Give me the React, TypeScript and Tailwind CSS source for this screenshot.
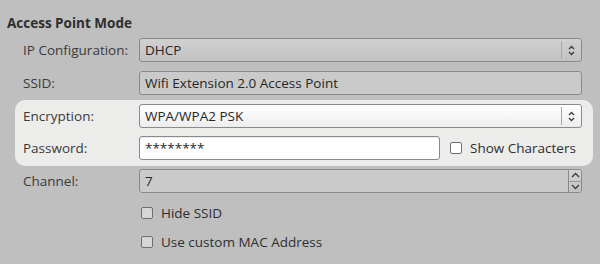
import React from "react";

const font = { fontFamily: '"Open Sans", "DejaVu Sans", sans-serif' };

function Arrows() {
  return (
    <svg width="7" height="11" viewBox="0 0 7 11" className="text-[#3a3a3a]">
      <path d="M1 4 L3.5 1.5 L6 4" fill="none" stroke="currentColor" strokeWidth="1.3" />
      <path d="M1 7 L3.5 9.5 L6 7" fill="none" stroke="currentColor" strokeWidth="1.3" />
    </svg>
  );
}

function Chevron({ up }: { up?: boolean }) {
  return (
    <svg width="9" height="6" viewBox="0 0 9 6" className="text-[#3a3a3a]">
      <path
        d={up ? "M1 5 L4.5 1.5 L8 5" : "M1 1 L4.5 4.5 L8 1"}
        fill="none"
        stroke="currentColor"
        strokeWidth="1.3"
      />
    </svg>
  );
}

function Combo({ value, enabled }: { value: string; enabled?: boolean }) {
  return (
    <div
      className={
        "flex-1 h-[24px] flex items-center rounded-[3px] border border-[#8a8a8a] " +
        (enabled
          ? "bg-gradient-to-b from-white to-[#ededed]"
          : "bg-gradient-to-b from-[#d0d0d0] to-[#c3c3c3]")
      }
    >
      <span className="flex-1 pl-[5px] text-[#262626]">{value}</span>
      <div className="h-[18px] w-px bg-[#a8a8a8]" />
      <div className="w-[19px] flex justify-center items-center">
        <Arrows />
      </div>
    </div>
  );
}

function TextBox({ value, enabled, className }: { value: string; enabled?: boolean; className?: string }) {
  return (
    <div
      className={
        "h-[24px] flex items-center rounded-[3px] border border-[#8a8a8a] pl-[5px] text-[#262626] " +
        (enabled ? "bg-white shadow-[inset_0_1px_1px_rgba(0,0,0,0.08)]" : "bg-[#cacaca]") +
        " " +
        (className ?? "flex-1")
      }
    >
      {value}
    </div>
  );
}

function Check({ light }: { light?: boolean }) {
  return (
    <div
      className={
        "w-[12px] h-[12px] rounded-[2px] border border-[#6f6f6f] " +
        (light ? "bg-white" : "bg-[#d6d6d6]")
      }
    />
  );
}

function Row({ label, children }: { label: string; children: React.ReactNode }) {
  return (
    <div className="flex items-center h-[24px]">
      <div className="w-[116px] text-[#3a3a3a]">{label}</div>
      {children}
    </div>
  );
}

export default function App() {
  return (
    <div
      className="w-[600px] h-[264px] bg-[#bfbfbf] text-[13.5px] leading-[20px] overflow-hidden"
      style={font}
    >
      <div className="h-[38px] pt-[13px] pl-[7px] font-bold text-[#2e2e2e]">Access Point Mode</div>

      <div className="pl-[15px] pr-[7px]">
        <div className="px-[8px] pr-[11px]">
          <Row label="IP Configuration:">
            <Combo value="DHCP" />
          </Row>
          <div className="mt-[9px]">
            <Row label="SSID:">
              <TextBox value="Wifi Extension 2.0 Access Point" />
            </Row>
          </div>
        </div>

        <div className="mt-[5px] pt-[4px] pb-[6px] pl-[8px] pr-[11px] rounded-[10px] bg-[#ececeb]">
          <Row label="Encryption:">
            <Combo value="WPA/WPA2 PSK" enabled />
          </Row>
          <div className="mt-[8px]">
            <Row label="Password:">
              <TextBox value="********" enabled className="w-[301px]" />
              <div className="ml-[10px] flex items-center gap-[8px] text-[#2e2e2e]">
                <Check light />
                <span>Show Characters</span>
              </div>
            </Row>
          </div>
        </div>

        <div className="px-[8px] pr-[11px] mt-[3px]">
          <Row label="Channel:">
            <div className="flex-1 h-[24px] flex rounded-[3px] border border-[#8a8a8a] bg-[#cacaca]">
              <span className="flex-1 pl-[5px] flex items-center text-[#262626]">7</span>
              <div className="w-[13px] flex flex-col border-l border-[#8a8a8a] bg-gradient-to-b from-[#d4d4d4] to-[#c2c2c2] rounded-r-[2px]">
                <div className="flex-1 flex items-center justify-center border-b border-[#9a9a9a]">
                  <Chevron up />
                </div>
                <div className="flex-1 flex items-center justify-center">
                  <Chevron />
                </div>
              </div>
            </div>
          </Row>

          <div className="mt-[8px] ml-[118px] flex flex-col gap-[5px] text-[#2e2e2e]">
            <div className="h-[24px] flex items-center gap-[8px]">
              <Check />
              <span>Hide SSID</span>
            </div>
            <div className="h-[24px] flex items-center gap-[8px]">
              <Check />
              <span>Use custom MAC Address</span>
            </div>
          </div>
        </div>
      </div>
    </div>
  );
}
